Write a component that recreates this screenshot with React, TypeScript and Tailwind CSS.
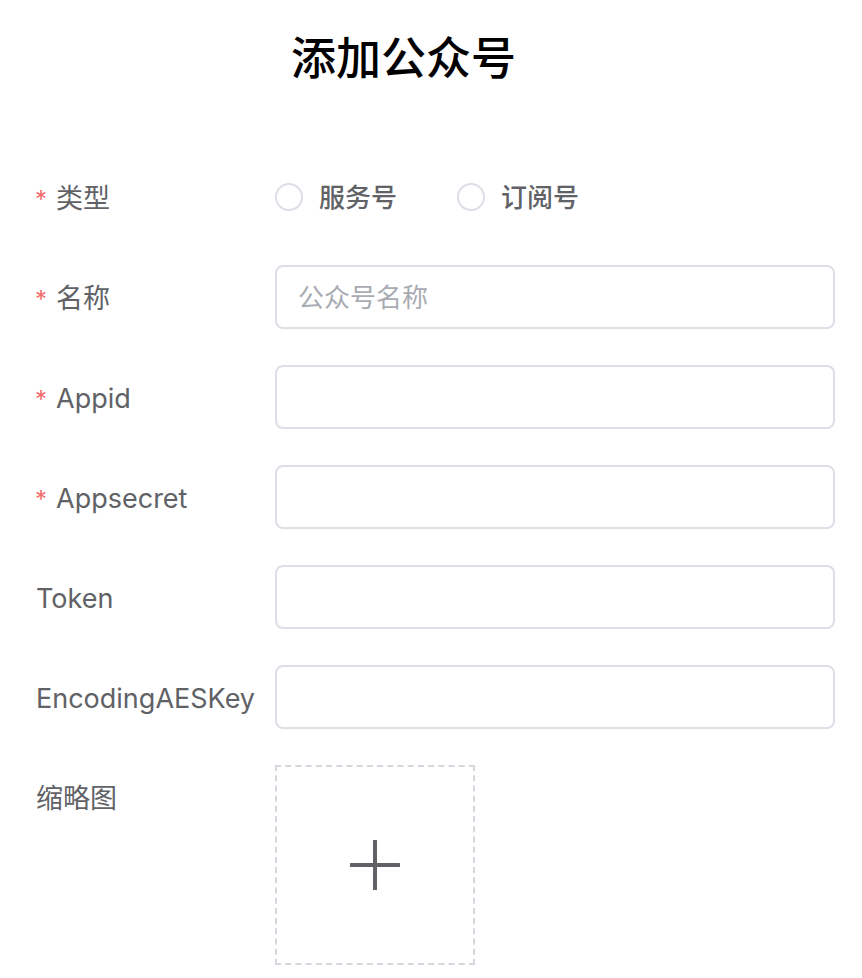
import React from "react";

const font = { fontFamily: '"Inter", "Noto Sans CJK SC", sans-serif' };

function Label({ text, required }: { text: string; required?: boolean }) {
  return (
    <div className="w-[239px] shrink-0 flex items-center h-[64px] pt-[4px] text-[27px] text-[#606266]">
      {required && <span className="text-[#f56c6c] mr-[9px] text-[24px] leading-none mt-[2px] -ml-[1px]">*</span>}
      <span>{text}</span>
    </div>
  );
}

function Input({ placeholder }: { placeholder?: string }) {
  return (
    <div className="flex-1 h-[64px] rounded-[8px] border-2 border-[#dcdfe6] flex items-center px-[21px] text-[26px] text-[#a8abb2]">
      {placeholder}
    </div>
  );
}

function Radio({ text }: { text: string }) {
  return (
    <div className="flex items-center mr-[60px]">
      <span className="w-[28px] h-[28px] rounded-full border-2 border-[#dcdfe6] mr-[16px]" />
      <span className="text-[26px] font-medium text-[#606266]">{text}</span>
    </div>
  );
}

export default function App() {
  return (
    <div className="w-[862px] h-[978px] bg-white overflow-hidden" style={font}>
      <div className="w-[807px] pt-[29px] text-center text-[45px] leading-[60px] font-medium text-black">添加公众号</div>
      <div className="pl-[36px] pr-[27px] mt-[76px] flex flex-col gap-[36px]">
        <div className="flex items-center">
          <Label text="类型" required />
          <div className="flex items-center h-[64px]">
            <Radio text="服务号" />
            <Radio text="订阅号" />
          </div>
        </div>
        <div className="flex items-center">
          <Label text="名称" required />
          <Input placeholder="公众号名称" />
        </div>
        <div className="flex items-center">
          <Label text="Appid" required />
          <Input />
        </div>
        <div className="flex items-center">
          <Label text="Appsecret" required />
          <Input />
        </div>
        <div className="flex items-center">
          <Label text="Token" />
          <Input />
        </div>
        <div className="flex items-center">
          <Label text="EncodingAESKey" />
          <Input />
        </div>
        <div className="flex items-start">
          <Label text="缩略图" />
          <div className="w-[200px] h-[200px] border-2 border-dashed border-[#d4d7de] flex items-center justify-center">
            <svg width="50" height="50" viewBox="0 0 50 50">
              <path d="M25 1v48M1 25h48" stroke="#606266" strokeWidth="4" strokeLinecap="round" />
            </svg>
          </div>
        </div>
      </div>
    </div>
  );
}
